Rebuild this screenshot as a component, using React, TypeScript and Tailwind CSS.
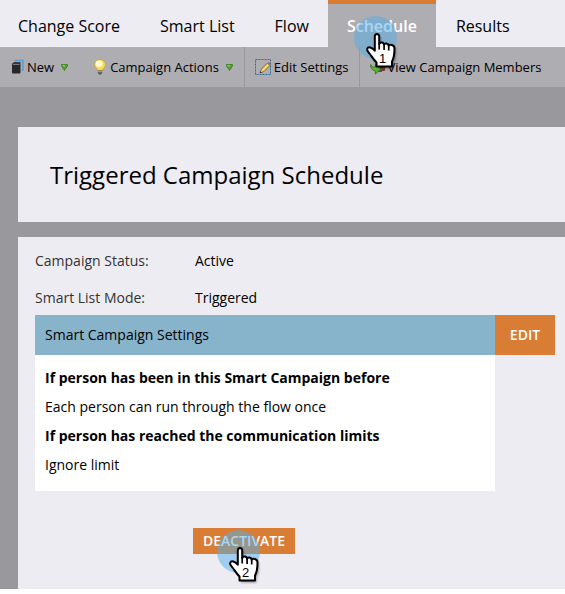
import React from "react";

function NewIcon() {
  return (
    <svg width="12" height="16" viewBox="0 0 12 16" aria-hidden="true">
      <path d="M3.500 2.500V1.500H11V11H9.500" fill="none" stroke="#56a0d8" strokeWidth="1.6" />
      <path d="M2 3h6.500v2H0z" fill="#3f4143" />
      <rect x="0" y="4.500" width="8.500" height="10" rx="1" fill="#26282a" />
      <path d="M1 5.500h6.500" stroke="#7b7d80" strokeWidth="1" />
    </svg>
  );
}

function BulbIcon() {
  return (
    <svg width="13" height="16" viewBox="0 0 13 16" aria-hidden="true">
      <path d="M6 .5a5.400 5.200 0 0 0-5.500 5.200C.5 8.300 3.200 9 3.500 11.500h5C8.800 9 11.500 8.300 11.500 5.700A5.400 5.200 0 0 0 6 .5z" fill="#f8dc5c" stroke="#c79f31" strokeWidth=".8" />
      <ellipse cx="5" cy="4.800" rx="3.400" ry="3.300" fill="#fffbd0" />
      <path d="M3.800 11.500h4.400v2.500L7 15.500H5L3.800 14z" fill="#55585e" />
      <path d="M4 12.700h4" stroke="#c3c6ca" strokeWidth=".8" />
    </svg>
  );
}

function EditIcon() {
  return (
    <svg width="16" height="16" viewBox="0 0 16 16" aria-hidden="true">
      <rect x=".5" y=".5" width="15" height="15" fill="none" stroke="#2c6ba3" strokeDasharray="2 1" />
      <path d="M5 14l1.300-3.800 6-6 2.500 2.500-6 6z" fill="#efc653" stroke="#76592a" strokeWidth=".8" />
      <path d="M7.500 11.200l5.500-5.500" stroke="#fff2b0" strokeWidth="1" />
      <path d="M12.800 4l1-1 2 2-1 1z" fill="#d8473c" />
      <path d="M5 14l.5-1.600 1.200 1z" fill="#222" />
    </svg>
  );
}

function MembersIcon() {
  return (
    <svg width="15" height="16" viewBox="0 0 15 16" aria-hidden="true">
      <rect x="10" y="7" width="5" height="5" rx="1" fill="#8c3a30" />
      <rect x="8" y="8" width="4" height="5" fill="#3c5a86" />
      <path d="M.8 5.500c.5 2 2 2.500 4.500 2.500V5l6 5-6 5v-3.200C2.500 11.500.3 9.500.8 5.500z" fill="#62b22f" stroke="#2f6d18" strokeWidth=".8" />
    </svg>
  );
}

function Caret() {
  return (
    <svg width="7" height="7" viewBox="0 0 7 7" aria-hidden="true">
      <path d="M.5.500h6v1.500L3.500 6.500.5 2z" fill="#56a02d" stroke="#397d20" strokeWidth=".8" />
      <path d="M1.500 1.800h2.500" stroke="#a5d67f" />
    </svg>
  );
}

const hand =
  "M8.800 3.500C8.800 0 13.200 0 13.200 3.500V11c.6-2.300 4.700-2 4.900.7.700-1.900 4.400-1.500 4.600.9 1-1.600 5.800-.8 5.800 2.700 0 7-.4 9.500-2.500 13.200V33.500H10.500V29.500C7.500 26.500 5.500 23 3.500 20.500 2.300 19 .6 17.800 1.200 15.800c.8-2.400 4.800-2 7.600 2z";

function StepMarker({ step, className }: { step: number; className: string }) {
  return (
    <span className={`pointer-events-none absolute z-10 block size-[43px] ${className}`} aria-hidden="true">
      <svg width="50" height="58" viewBox="0 0 50 58" className="max-w-none">
        <circle cx="21.500" cy="21.500" r="21.500" fill="#54aee8" fillOpacity=".5" />
        <g transform="translate(12 17)">
          <path d={hand} fill="#000" opacity=".4" transform="translate(1.500 2)" className="blur-[1px]" />
          <path d={hand} fill="#fff" stroke="#000" strokeWidth="2" strokeLinejoin="round" />
          <path d="M13.200 10v6.500M18.100 11v6M22.700 12v5.500" stroke="#000" strokeWidth="1.700" />
          <text x="16.500" y="30" textAnchor="middle" className="fill-black font-['Liberation_Sans',sans-serif] text-[13px] font-normal">{step}</text>
        </g>
      </svg>
    </span>
  );
}

const tool = "flex h-10 items-center gap-[3px] whitespace-nowrap";

export default function App() {
  return (
    <div className="overflow-x-hidden bg-white pb-[5px] font-['Open_Sans','Noto_Sans',sans-serif] text-sm text-black">
      <div className="bg-[#99989d]">
        <nav className="flex h-[47px] bg-[#edecf2] text-base whitespace-nowrap">
          <a href="#score" className="pt-[14px] pr-5 pl-[18px]">Change Score</a>
          <a href="#list" className="px-5 pt-[14px]">Smart List</a>
          <a href="#flow" className="pt-[14px] pr-[19px] pl-5">Flow</a>
          <a href="#schedule" aria-current="page" className="relative border-t-4 border-[#d97c34] bg-[#aeadb2] px-[19px] pt-[10px] font-semibold text-white">
            Schedule
            <StepMarker step={1} className="top-3 left-[26px]" />
          </a>
          <a href="#results" className="px-5 pt-[14px]">Results</a>
        </nav>

        <div className="flex h-10 bg-[#aeadb2] text-[13px]">
          <button className={`${tool} pl-3`}>
            <NewIcon />New<span className="pl-1"><Caret /></span>
          </button>
          <button className={`${tool} border-r border-[#99989d] pr-[11px] pl-[26px]`}>
            <BulbIcon />Campaign Actions<span className="pl-1"><Caret /></span>
          </button>
          <button className={`${tool} border-r border-[#99989d] px-2.5`}>
            <EditIcon />Edit Settings
          </button>
          <button className={`${tool} pl-2.5`}>
            <MembersIcon />View Campaign Members
          </button>
        </div>

        <main className="flex flex-col gap-[15px] pt-10 pl-[18px]">
          <header className="flex h-[95px] items-center bg-[#edecf2] pl-8">
            <h1 className="text-2xl">Triggered Campaign Schedule</h1>
          </header>

          <section className="bg-[#edecf2] pt-3.5 pr-2.5 pb-[35px] pl-[17px]">
            <dl className="grid grid-cols-[160px_1fr] gap-y-[17px] pb-[7px] leading-5">
              <dt className="text-[#333]">Campaign Status:</dt>
              <dd>Active</dd>
              <dt className="text-[#333]">Smart List Mode:</dt>
              <dd>Triggered</dd>
            </dl>

            <div className="flex items-start">
              <div className="flex-1 bg-white">
                <h2 className="flex h-10 items-center bg-[#87b3cb] px-2.5">Smart Campaign Settings</h2>
                <div className="px-2.5 pt-2 pb-3 leading-[29px]">
                  <p className="font-bold">If person has been in this Smart Campaign before</p>
                  <p>Each person can run through the flow once</p>
                  <p className="font-bold">If person has reached the communication limits</p>
                  <p>Ignore limit</p>
                </div>
              </div>
              <button className="h-10 w-15 bg-[#d97c34] font-semibold text-white">EDIT</button>
            </div>

            <button className="relative mt-[37px] ml-[158px] block h-[26px] bg-[#d97c34] px-2.5 font-semibold text-white">
              DEACTIVATE
              <StepMarker step={2} className="top-0.5 left-6" />
            </button>
          </section>
        </main>
      </div>
    </div>
  );
}
